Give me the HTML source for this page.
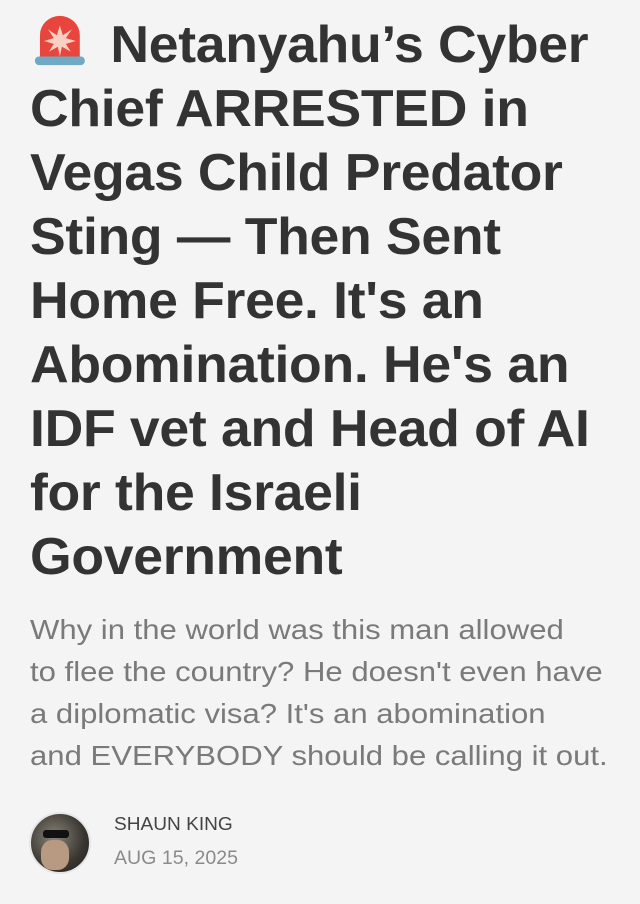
<!DOCTYPE html>
<html><head><meta charset="utf-8"><style>
body{margin:0;background:#f4f4f4;width:640px;height:904px;overflow:hidden;font-family:"Liberation Sans",sans-serif}
h1{position:absolute;left:30px;top:13px;margin:0;white-space:nowrap;font-size:52px;line-height:64px;font-weight:bold;color:#333;transform:scaleX(1.03);transform-origin:0 0;letter-spacing:-0.3px}
.sub{position:absolute;left:30px;top:609px;white-space:nowrap;font-size:28px;line-height:42px;color:#7a7a7a;margin:0;transform:scaleX(1.11);transform-origin:0 0}
.av{position:absolute;left:29px;top:812px;width:62px;height:62px;border-radius:50%;background:radial-gradient(circle at 40% 40%,#8a8478,#3a3632 60%,#1e1c1a);border:2px solid #e6e6e6;box-sizing:border-box;overflow:hidden}
.name{position:absolute;left:114px;top:814px;font-size:18px;color:#444;transform:scaleX(1.06);transform-origin:0 0}
.date{position:absolute;left:114px;top:848px;font-size:19px;color:#8a8a8a;transform:scaleX(1.03);transform-origin:0 0}
</style></head><body>
<h1><svg width="58" height="54" viewBox="0 0 60 52" style="vertical-align:-6px;margin-right:20px"><path d="M10 44 V20 A20 20 0 0 1 50 20 V44 Z" fill="#e8453c"/><path d="M30 10 L33 20 L42 14 L36 23 L46 26 L36 29 L41 37 L32 32 L30 42 L28 32 L19 37 L24 29 L14 26 L24 23 L18 14 L27 20 Z" fill="#fbd0c4"/><rect x="5" y="42" width="50" height="9" rx="4" fill="#6fa9c4"/></svg>Netanyahu’s Cyber<br>Chief ARRESTED in<br>Vegas Child Predator<br>Sting — Then Sent<br>Home Free. It's an<br>Abomination. He's an<br>IDF vet and Head of AI<br>for the Israeli<br>Government</h1>
<p class="sub">Why in the world was this man allowed<br>to flee the country? He doesn't even have<br>a diplomatic visa? It's an abomination<br>and EVERYBODY should be calling it out.</p>
<div class="av"><div style="position:absolute;left:12px;top:16px;width:26px;height:8px;background:#111;border-radius:3px"></div><div style="position:absolute;left:10px;top:26px;width:28px;height:30px;background:#b89a82;border-radius:40%"></div></div>
<div class="name">SHAUN KING</div>
<div class="date">AUG 15, 2025</div>
</body></html>
